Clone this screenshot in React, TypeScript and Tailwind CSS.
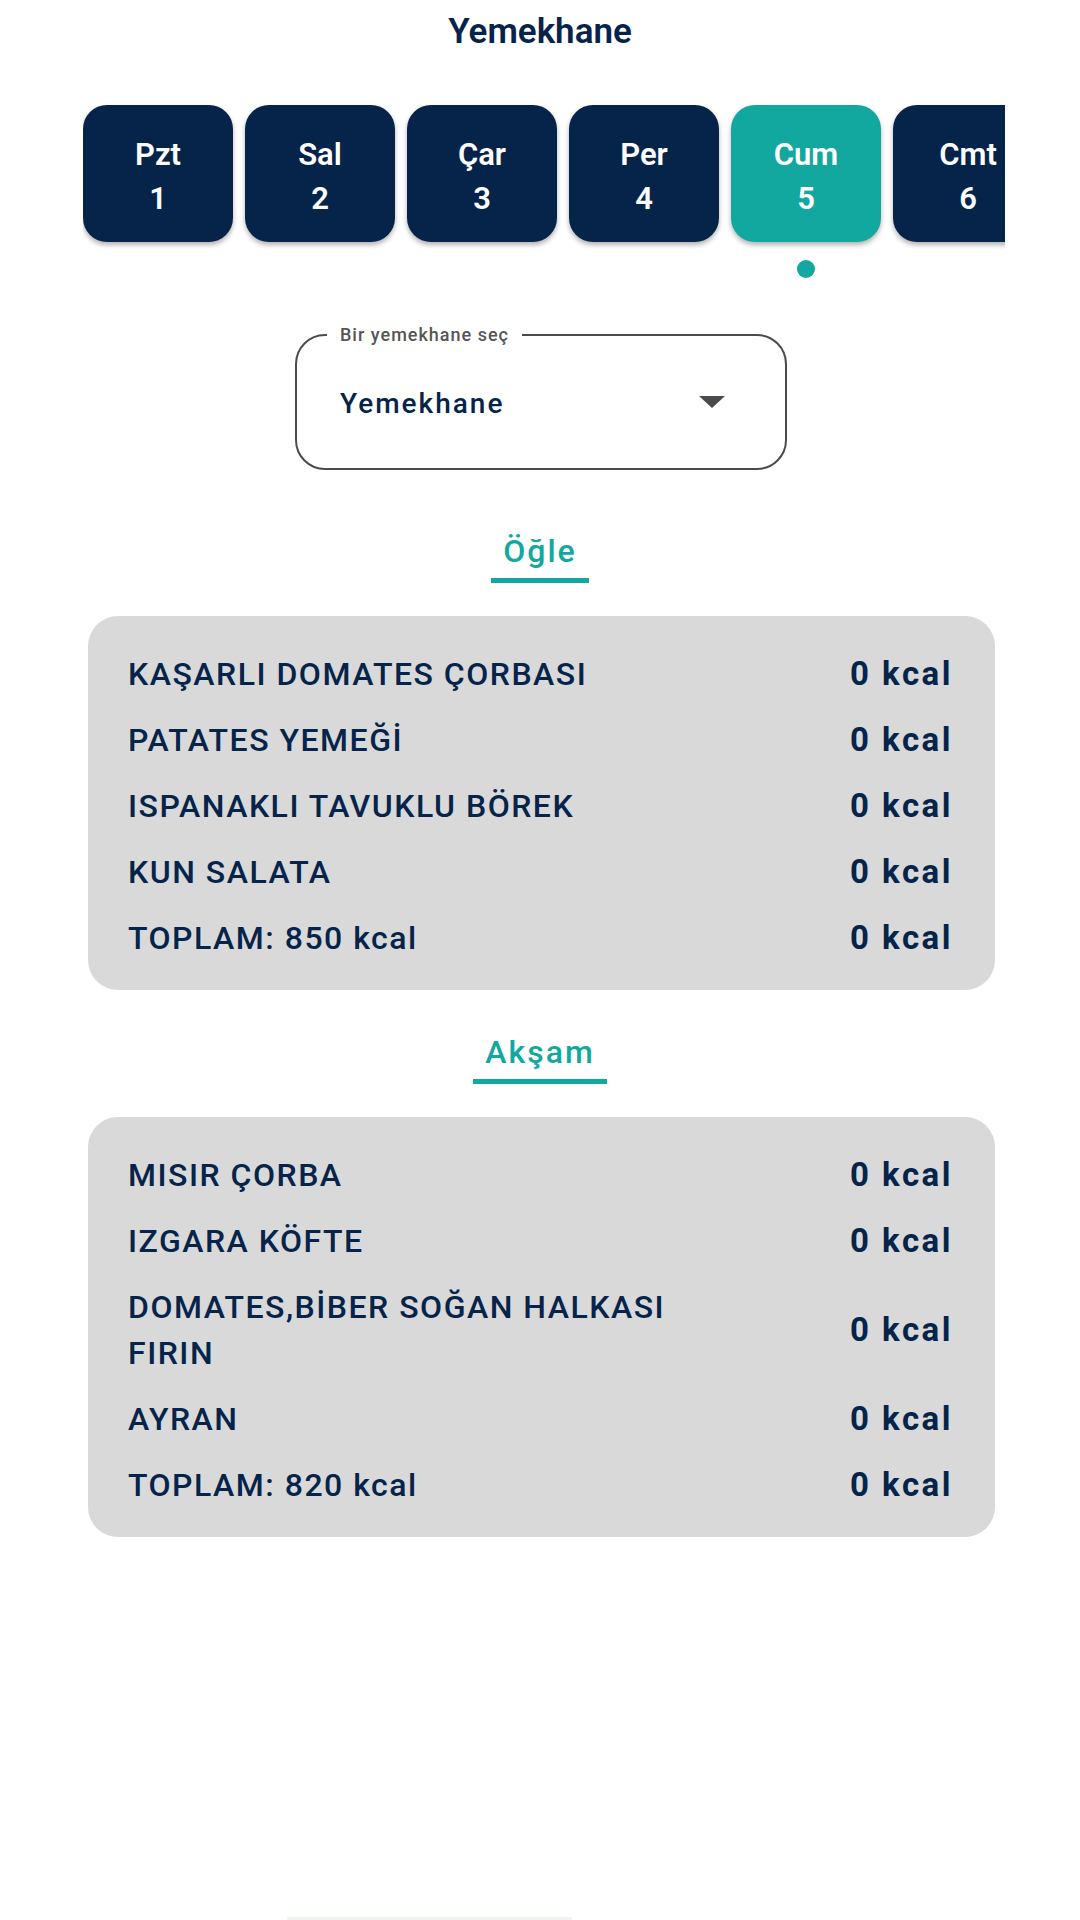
import React from "react";

const days: [string, string][] = [
  ["Pzt", "1"],
  ["Sal", "2"],
  ["Çar", "3"],
  ["Per", "4"],
  ["Cum", "5"],
  ["Cmt", "6"],
  ["Paz", "7"],
];

const lunch = [
  "KAŞARLI DOMATES ÇORBASI",
  "PATATES YEMEĞİ",
  "ISPANAKLI TAVUKLU BÖREK",
  "KUN SALATA",
  "TOPLAM: 850 kcal",
];

const dinner = [
  "MISIR ÇORBA",
  "IZGARA KÖFTE",
  "DOMATES,BİBER SOĞAN HALKASI FIRIN",
  "AYRAN",
  "TOPLAM: 820 kcal",
];

function Heading({ text, className }: { text: string; className: string }) {
  return (
    <div className={"flex justify-center " + className}>
      <div className="inline-flex flex-col items-stretch">
        <div className="px-[12px] text-center text-[32px] leading-[40px] font-medium tracking-[2px] text-[#12a79f]">
          {text}
        </div>
        <div className="mt-[7px] h-[5px] bg-[#12a79f]" />
      </div>
    </div>
  );
}

function MenuCard({ items, className }: { items: string[]; className: string }) {
  return (
    <div
      className={
        "ml-[88px] w-[907px] rounded-[30px] bg-[#d9d9d9] pt-[25px] pb-[19px] pl-[40px] pr-[42px] " +
        className
      }
    >
      {items.map((it, i) => (
        <div key={i} className="flex items-center justify-between py-[10px]">
          <div className="max-w-[600px] text-[32px] leading-[46px] font-medium tracking-[1.5px] text-[#06244a]">
            {it}
          </div>
          <div className="whitespace-nowrap text-[33px] leading-[46px] font-bold tracking-[2.5px] text-[#06244a]">
            0 kcal
          </div>
        </div>
      ))}
    </div>
  );
}

export default function App() {
  return (
    <div className="flex h-[1920px] flex-col overflow-hidden bg-white font-['Roboto',sans-serif]">
      <h1 className="pt-[10px] text-center text-[35px] leading-[44px] font-semibold text-[#06244a]">
        Yemekhane
      </h1>

      <div className="mt-[51px] ml-[83px] w-[922px] overflow-hidden">
        <div className="flex gap-[12px]">
          {days.map(([d, n], i) => (
            <div
              key={d}
              className={
                "flex h-[137px] w-[150px] shrink-0 flex-col items-center justify-center rounded-[24px] pt-[7px] text-[31px] leading-[44px] font-semibold text-white shadow-[0_3px_5px_rgba(0,0,0,0.3)] " +
                (i === 4 ? "bg-[#12a79f]" : "bg-[#06244a]")
              }
            >
              <span>{d}</span>
              <span>{n}</span>
            </div>
          ))}
        </div>
        <div className="mt-[18px] flex gap-[12px]">
          {days.map(([d], i) => (
            <div key={d} className="flex w-[150px] shrink-0 justify-center">
              {i === 4 ? <div className="h-[18px] w-[18px] rounded-full bg-[#12a79f]" /> : <div className="h-[18px]" />}
            </div>
          ))}
        </div>
      </div>

      <div className="relative mt-[56px] ml-[295px] flex h-[136px] w-[492px] items-center rounded-[30px] border-2 border-[#4a4a4f] pl-[43px] pr-[60px]">
        <div className="absolute top-[-12px] left-[30px] bg-white px-[13px] text-[18px] leading-[22px] font-medium tracking-[1px] text-[#555559]">
          Bir yemekhane seç
        </div>
        <div className="flex-1 pt-[3px] text-[28px] leading-[36px] font-medium tracking-[2px] text-[#06244a]">
          Yemekhane
        </div>
        <svg width="26" height="12" viewBox="0 0 26 12">
          <path d="M0 0 H26 L13 12 Z" fill="#4a4a4f" />
        </svg>
      </div>

      <Heading text="Öğle" className="mt-[61px]" />
      <MenuCard items={lunch} className="mt-[33px]" />

      <Heading text="Akşam" className="mt-[42px]" />
      <MenuCard items={dinner} className="mt-[33px]" />

      <div className="mt-auto ml-[287px] h-[3px] w-[285px] bg-[#f1f4f7]" />
    </div>
  );
}
